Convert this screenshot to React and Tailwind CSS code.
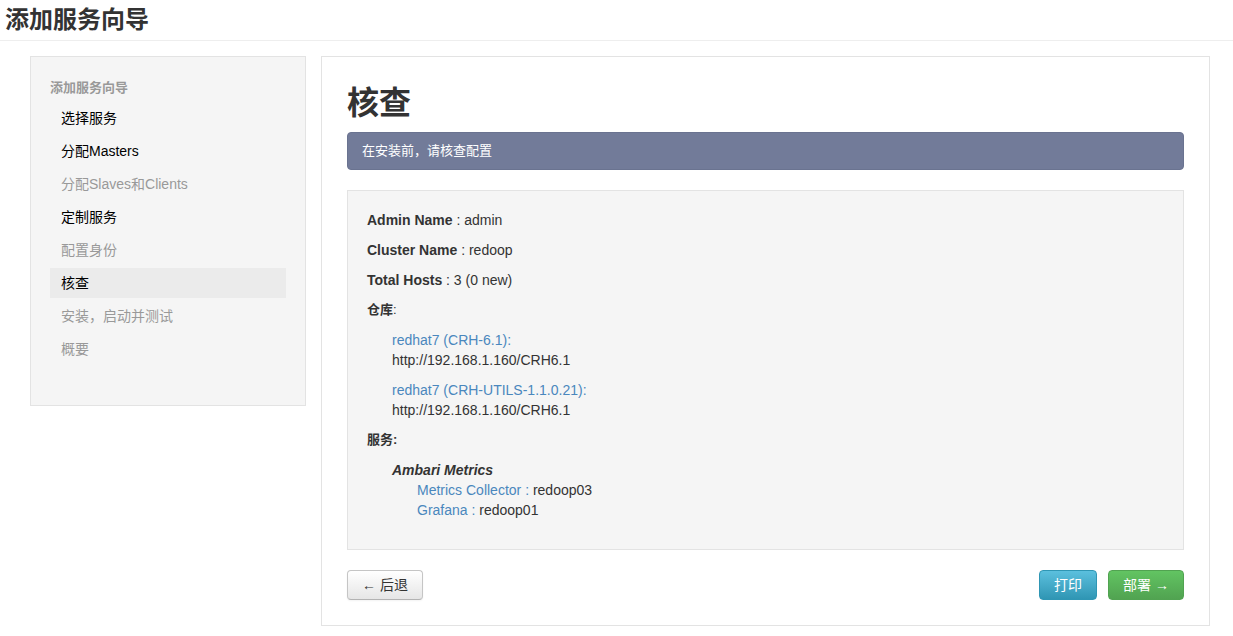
import React from 'react'

const font = { fontFamily: '"Liberation Sans", Arial, "Noto Sans CJK SC", sans-serif' }

const steps = [
  { label: '选择服务', state: 'done' },
  { label: '分配Masters', state: 'done' },
  { label: '分配Slaves和Clients', state: 'off' },
  { label: '定制服务', state: 'done' },
  { label: '配置身份', state: 'off' },
  { label: '核查', state: 'active' },
  { label: '安装，启动并测试', state: 'off' },
  { label: '概要', state: 'off' },
]

const App = () => {
  return (
    <div className="min-h-screen bg-white text-[14px] text-[#333]" style={font}>
      {/* Header */}
      <div className="h-[41px] border-b border-[#eee] px-[5px] flex items-center">
        <h1 className="text-[24px] font-bold text-[#333] leading-none">添加服务向导</h1>
      </div>

      <div className="flex items-start pl-[30px] pt-[15px] gap-[15px]">
        {/* Sidebar */}
        <div className="w-[276px] h-[350px] bg-[#f5f5f5] border border-[#e3e3e3] px-[19px] pt-[22px]">
          <div className="text-[13px] font-bold text-[#999] h-[18px] leading-[18px]">添加服务向导</div>
          <ul className="mt-[6px]">
            {steps.map((s) => (
              <li
                key={s.label}
                className={`h-[30px] leading-[30px] mt-[3px] pl-[11px] ${
                  s.state === 'active' ? 'bg-[#ebebeb] text-[#000]' : s.state === 'done' ? 'text-[#000]' : 'text-[#999]'
                }`}
              >
                {s.label}
              </li>
            ))}
          </ul>
        </div>

        {/* Main panel */}
        <div className="w-[889px] h-[570px] border border-[#e3e3e3] px-[25px] pt-[24px]">
          <h2 className="text-[32px] font-bold text-[#333] leading-[44px] h-[44px]">核查</h2>
          <div className="mt-[7px] h-[38px] bg-[#727b99] rounded-[4px] text-white text-[13px] flex items-center px-[14px] border border-[#6a7390]">
            在安装前，请核查配置
          </div>

          <div className="mt-[20px] h-[360px] bg-[#f5f5f5] border border-[#e3e3e3] px-[19px] pt-[19px]">
            <div className="leading-[20px]">
              <b>Admin Name</b> : admin
            </div>
            <div className="leading-[20px] mt-[10px]">
              <b>Cluster Name</b> : redoop
            </div>
            <div className="leading-[20px] mt-[10px]">
              <b>Total Hosts</b> : 3 (0 new)
            </div>
            <div className="leading-[20px] mt-[10px] text-[13px]">
              <b>仓库</b>:
            </div>
            <div className="pl-[25px] mt-[10px]">
              <div className="leading-[20px] text-[#4a87bd]">redhat7 (CRH-6.1):</div>
              <div className="leading-[20px]">http://192.168.1.160/CRH6.1</div>
              <div className="leading-[20px] mt-[10px] text-[#4a87bd]">redhat7 (CRH-UTILS-1.1.0.21):</div>
              <div className="leading-[20px]">http://192.168.1.160/CRH6.1</div>
            </div>
            <div className="leading-[20px] mt-[10px] text-[13px]">
              <b>服务:</b>
            </div>
            <div className="pl-[25px] mt-[10px]">
              <div className="leading-[20px] font-bold italic">Ambari Metrics</div>
              <div className="pl-[25px]">
                <div className="leading-[20px]">
                  <span className="text-[#4a87bd]">Metrics Collector : </span>redoop03
                </div>
                <div className="leading-[20px]">
                  <span className="text-[#4a87bd]">Grafana : </span>redoop01
                </div>
              </div>
            </div>
          </div>

          <div className="mt-[20px] flex items-center justify-between">
            <button className="h-[30px] w-[76px] rounded-[4px] border border-[#c5c5c5] border-b-[#b3b3b3] bg-gradient-to-b from-white to-[#e6e6e6] text-[#333] shadow-[0_1px_2px_rgba(0,0,0,0.05)]">
              ← 后退
            </button>
            <div className="flex gap-[11px]">
              <button className="h-[30px] w-[58px] rounded-[4px] border border-[#2f96b4] bg-gradient-to-b from-[#5bc0de] to-[#2f96b4] text-white">
                打印
              </button>
              <button className="h-[30px] w-[76px] rounded-[4px] border border-[#51a351] bg-gradient-to-b from-[#62c462] to-[#51a351] text-white">
                部署 →
              </button>
            </div>
          </div>
        </div>
      </div>
    </div>
  )
}

export default App
